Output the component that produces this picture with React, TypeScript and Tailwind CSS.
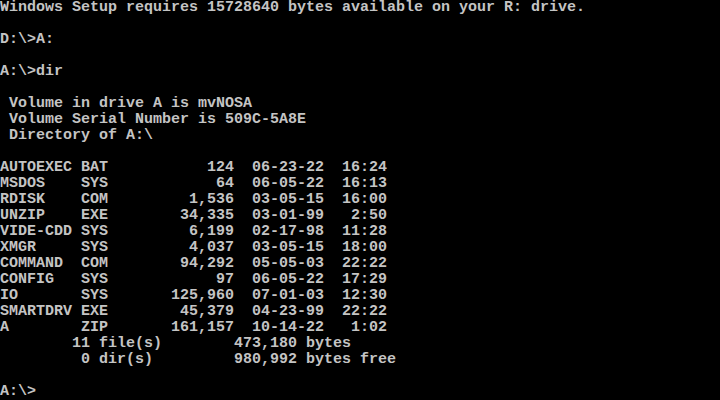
import React from 'react';

// 80x25 text-mode screen, each cell 9x16px
const files: [string, string, string, string, string][] = [
  ['AUTOEXEC', 'BAT', '124', '06-23-22', '16:24'],
  ['MSDOS', 'SYS', '64', '06-05-22', '16:13'],
  ['RDISK', 'COM', '1,536', '03-05-15', '16:00'],
  ['UNZIP', 'EXE', '34,335', '03-01-99', '2:50'],
  ['VIDE-CDD', 'SYS', '6,199', '02-17-98', '11:28'],
  ['XMGR', 'SYS', '4,037', '03-05-15', '18:00'],
  ['COMMAND', 'COM', '94,292', '05-05-03', '22:22'],
  ['CONFIG', 'SYS', '97', '06-05-22', '17:29'],
  ['IO', 'SYS', '125,960', '07-01-03', '12:30'],
  ['SMARTDRV', 'EXE', '45,379', '04-23-99', '22:22'],
  ['A', 'ZIP', '161,157', '10-14-22', '1:02'],
];

const fileLine = ([name, ext, size, date, time]: [string, string, string, string, string]) =>
  name.padEnd(8) + ' ' + ext.padEnd(3) + size.padStart(14) + '  ' + date + '  ' + time.padStart(5);

const lines: string[] = [
  'Windows Setup requires 15728640 bytes available on your R: drive.',
  '',
  'D:\\>A:',
  '',
  'A:\\>dir',
  '',
  ' Volume in drive A is mvNOSA',
  ' Volume Serial Number is 509C-5A8E',
  ' Directory of A:\\',
  '',
  ...files.map(fileLine),
  '        11 file(s)        473,180 bytes',
  '         0 dir(s)         980,992 bytes free',
  '',
  'A:\\>',
];

const App: React.FC = () => {
  return (
    <div className="w-[720px] h-[400px] bg-black overflow-hidden">
      <div className="font-['Liberation_Mono',monospace] font-bold text-[15px] leading-4 text-[#c4c4c4]">
        {lines.map((line, i) => (
          <div key={i} className="h-4 whitespace-pre">
            {line}
          </div>
        ))}
      </div>
    </div>
  );
};

export default App;
